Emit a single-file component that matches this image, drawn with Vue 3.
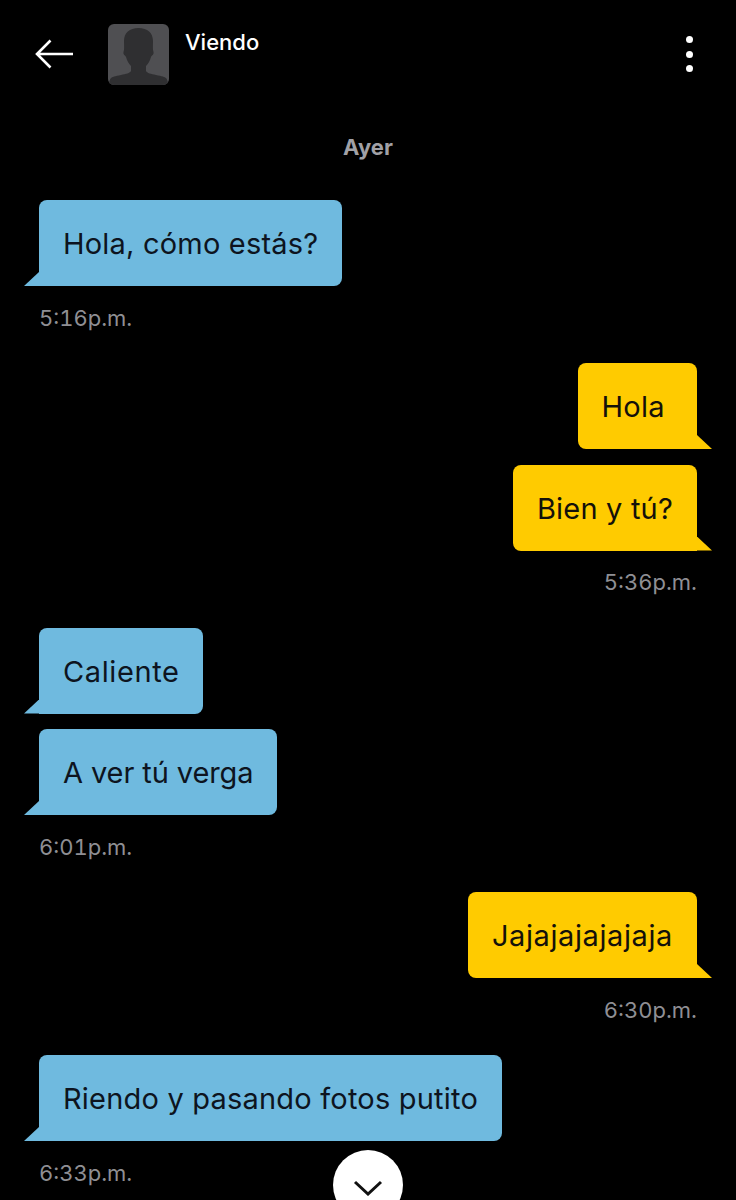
<template>
  <div class="screen">
    <header class="topbar">
      <svg class="back" width="40" height="30" viewBox="0 0 40 30">
        <path d="M39 15H3M16.500 1.500 3 15l13.500 13.500" fill="none" stroke="#fff" stroke-width="2.6" />
      </svg>
      <div class="avatar">
        <svg width="61" height="61" viewBox="0 0 61 61">
          <path d="M30.500 4c-9 0-14.500 5-14.500 13 0 5 .5 8-.5 11-.5 3 1.500 3 2.500 5 1 4 3 7 5 9v5c-1 2-5 3-10 4-6 1-9 2-10 3-1 1-2 3-2 7h59c0-4-1-6-2-7-1-1-4-2-10-3-5-1-9-2-10-4v-5c2-2 4-5 5-9 1-2 3-2 2.500-5-1-3-.5-6-.5-11 0-8-5.500-13-14.500-13z" fill="#2f2f31" />
        </svg>
      </div>
      <span class="status">Viendo</span>
      <div class="dots"><i></i><i></i><i></i></div>
    </header>

    <div class="day">Ayer</div>

    <section v-for="g in groups" :key="g.time" class="group" :class="g.side">
      <div v-for="m in g.msgs" :key="m.text" class="bubble" :class="m.fit">{{ m.text }}</div>
      <small class="time">{{ g.time }}</small>
    </section>

    <button class="fab">
      <svg width="30" height="16" viewBox="0 0 30 16">
        <path d="M2 2l13 12L28 2" fill="none" stroke="#111" stroke-width="3" />
      </svg>
    </button>
  </div>
</template>

<script setup>
// fit: tracking tweak, Inter runs a bit off the original font on these lines
const groups = [
  { side: 'them', time: '5:16p.m.', msgs: [{ text: 'Hola, cómo estás?' }] },
  { side: 'me', time: '5:36p.m.', msgs: [{ text: 'Hola\u00a0' }, { text: 'Bien y tú?' }] },
  { side: 'them', time: '6:01p.m.', msgs: [{ text: 'Caliente', fit: 'loose' }, { text: 'A ver tú verga', fit: 'tight' }] },
  { side: 'me', time: '6:30p.m.', msgs: [{ text: 'Jajajajajajaja', fit: 'loose' }] },
  { side: 'them', time: '6:33p.m.', msgs: [{ text: 'Riendo y pasando fotos putito' }] }
]
</script>

<style>
html, body { background: #000; }
</style>

<style scoped>
.screen {
  position: relative;
  width: 736px;
  height: 1200px;
  overflow: hidden;
  background: #000;
  font-family: Inter, "Noto Sans", sans-serif;
}
.topbar { display: flex; align-items: flex-start; height: 85px; padding: 24px 43px 0 34px; box-sizing: border-box; }
.back { margin-top: 15px; flex: none; }
.avatar { width: 61px; height: 61px; margin-left: 34px; border-radius: 6px; background: #4f4f52; overflow: hidden; flex: none; }
.avatar svg { display: block; }
.status { margin-left: 16px; margin-top: 3px; color: #fff; font-size: 22px; line-height: 30px; font-weight: 500; }
.dots { margin-left: auto; margin-top: 12px; display: flex; flex-direction: column; gap: 7.500px; }
.dots i { display: block; width: 7px; height: 7px; border-radius: 50%; background: #fff; }
.day { margin-top: 47px; height: 30px; line-height: 30px; text-align: center; color: #a1a1a6; font-size: 22px; font-weight: 700; }
.group { display: flex; flex-direction: column; gap: 15.500px; padding: 0 39px; margin-bottom: 30.500px; }
.day + .group { margin-top: 38px; }
.me { align-items: flex-end; }
.them { align-items: flex-start; }
.bubble {
  position: relative;
  height: 86px;
  line-height: 88px;
  padding: 0 24px;
  border-radius: 8px;
  font-size: 29px;
  letter-spacing: .2px;
  white-space: pre;
  color: #0d1420;
}
.bubble.loose { letter-spacing: .6px; }
.bubble.tight { letter-spacing: -.1px; }
.them .bubble { background: #6fbadf; border-bottom-left-radius: 0; }
.me .bubble { background: #ffcb00; color: #14110a; border-bottom-right-radius: 0; }
.bubble::after { content: ""; position: absolute; bottom: 0; width: 15px; height: 14px; }
.them .bubble::after { left: -15px; background: #6fbadf; clip-path: polygon(100% 0, 100% 100%, 0 100%); }
.me .bubble::after { right: -15px; background: #ffcb00; clip-path: polygon(0 0, 100% 100%, 0 100%); }
.time { margin-top: -1px; height: 32px; line-height: 34px; color: #8f8f94; font-size: 22px; font-variant-numeric: tabular-nums; }
.fab {
  position: absolute;
  left: 333px;
  top: 1150px;
  width: 70px;
  height: 70px;
  padding: 30px 0 0;
  border: 0;
  border-radius: 50%;
  background: #fff;
  display: flex;
  justify-content: center;
  align-items: flex-start;
}
</style>
